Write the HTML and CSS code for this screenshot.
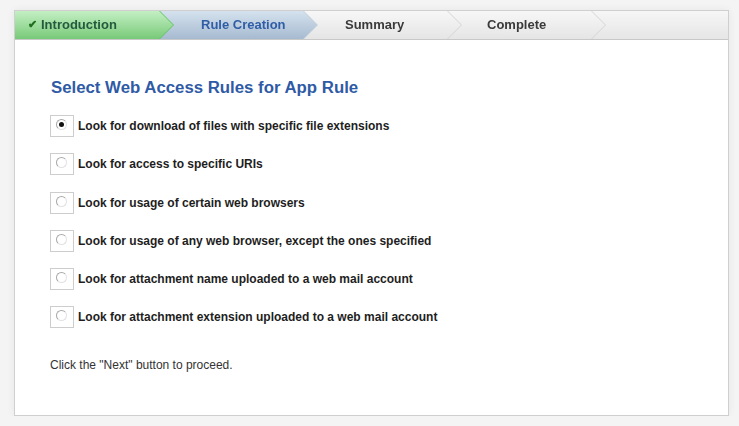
FILE: index.html
```html
<!DOCTYPE html>
<html lang="en">
<head>
    <meta charset="UTF-8">
    <title>App Rule Wizard</title>
    <link rel="stylesheet" href="styles.css">
</head>
<body>

<div class="wizard">
    <div class="steps">
        <div class="step done"><span class="shape"><span class="check">&#10004;</span>Introduction</span></div>
        <div class="step current"><span class="shape">Rule Creation</span></div>
        <div class="step"><span class="shape">Summary</span></div>
        <div class="step"><span class="shape">Complete</span></div>
    </div>

    <div class="content">
        <h1>Select Web Access Rules for App Rule</h1>

        <div class="options">
            <label class="option"><span class="box"><span class="radio checked"></span></span>Look for download of files with specific file extensions</label>
            <label class="option"><span class="box"><span class="radio"></span></span>Look for access to specific URIs</label>
            <label class="option"><span class="box"><span class="radio"></span></span>Look for usage of certain web browsers</label>
            <label class="option"><span class="box"><span class="radio"></span></span>Look for usage of any web browser, except the ones specified</label>
            <label class="option"><span class="box"><span class="radio"></span></span>Look for attachment name uploaded to a web mail account</label>
            <label class="option"><span class="box"><span class="radio"></span></span>Look for attachment extension uploaded to a web mail account</label>
        </div>

        <p class="hint">Click the "Next" button to proceed.</p>
    </div>
</div>

</body>
</html>
```

FILE: styles.css
```css
body {
    font-family: Arial, "Liberation Sans", sans-serif;
    background-color: #f4f4f4;
    margin: 0;
    padding: 10px 0 0 14px;
}
.wizard {
    width: 713px;
    height: 404px;
    background: #fff;
    border: 1px solid #cfcfcf;
    box-shadow: 0 0 8px rgba(0, 0, 0, 0.06);
}
.steps {
    display: flex;
    height: 28px;
    background: linear-gradient(#f6f6f6, #e6e6e6);
    border-bottom: 1px solid #c8c8c8;
}
.step {
    width: 158px;
    margin-right: -14px;
    filter: drop-shadow(1px 0 0 #d4d4d4);
}
.step:nth-child(1) { z-index: 4; }
.step:nth-child(2) { z-index: 3; }
.step:nth-child(3) { z-index: 2; }
.step:nth-child(4) { z-index: 1; }
.shape {
    display: flex;
    align-items: center;
    height: 27px;
    padding-left: 42px;
    padding-bottom: 1px;
    font-size: 13px;
    font-weight: bold;
    color: #3a3a3a;
    background: linear-gradient(#f7f7f7, #e5e5e5);
    clip-path: polygon(0 0, calc(100% - 14px) 0, 100% 50%, calc(100% - 14px) 100%, 0 100%);
}
.step:nth-child(4) .shape {
    padding-left: 40px;
}
.step.done {
    filter: drop-shadow(1px 0 0 #5fc45f);
}
.step.done .shape {
    padding-left: 13px;
    color: #245a3e;
    background: linear-gradient(#c4efc4, #78c978);
}
.step.current {
    filter: drop-shadow(1px 0 0 #c2cfdc);
}
.step.current .shape {
    color: #2f5ea6;
    background: linear-gradient(#d5e2ee, #a6bad0);
}
.check {
    color: #1d6e1d;
    font-size: 11px;
    margin-right: 4px;
}
.content {
    padding: 38px 35px 0;
}
h1 {
    margin: 0 0 17px 1px;
    font-size: 16.8px;
    line-height: 20px;
    color: #2f5aa6;
}
.options {
    display: flex;
    flex-direction: column;
    gap: 16.3px;
}
.option {
    display: flex;
    align-items: center;
    gap: 4px;
    font-size: 12px;
    font-weight: bold;
    color: #1e1e1e;
}
.box {
    width: 22px;
    height: 20px;
    border: 1px solid #cdcdcd;
    background: #fff;
    position: relative;
}
.radio {
    position: absolute;
    left: 5px;
    top: 3px;
    width: 9px;
    height: 9px;
    border-radius: 50%;
    border: 1px solid #a8a8a8;
    border-right-color: #e2e2e2;
    border-bottom-color: #e2e2e2;
    background: #fff;
}
.radio.checked::after {
    content: "";
    position: absolute;
    left: 2px;
    top: 2px;
    width: 5px;
    height: 5px;
    border-radius: 50%;
    background: #111;
}
.hint {
    margin: 30px 0 0;
    font-size: 12px;
    color: #333;
}
```
